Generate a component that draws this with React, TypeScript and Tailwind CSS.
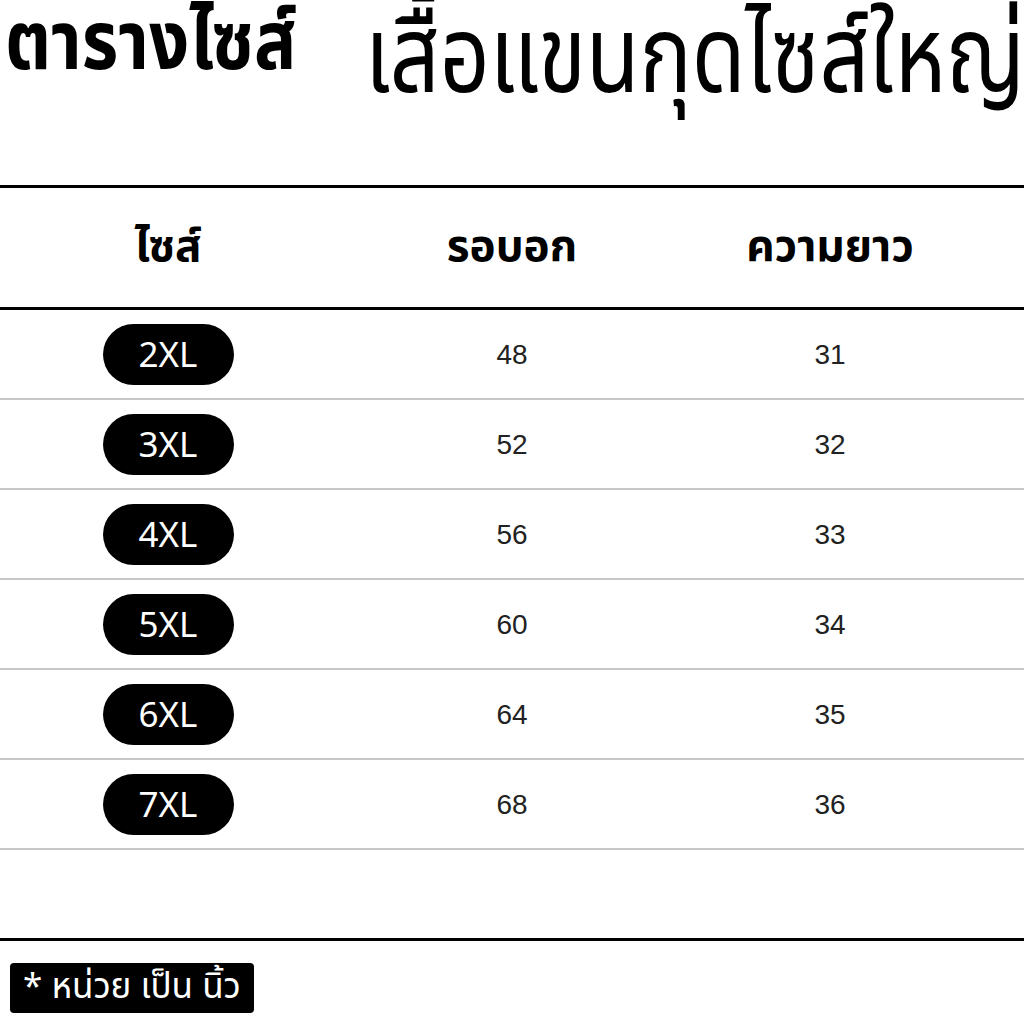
const rows = [
  { size: "2XL", chest: "48", length: "31" },
  { size: "3XL", chest: "52", length: "32" },
  { size: "4XL", chest: "56", length: "33" },
  { size: "5XL", chest: "60", length: "34" },
  { size: "6XL", chest: "64", length: "35" },
  { size: "7XL", chest: "68", length: "36" },
];

const thai = { fontFamily: '"Noto Sans Thai", "Noto Sans Thai Looped", Loma, Garuda, "Noto Sans", sans-serif' };
const arial = { fontFamily: '"Liberation Sans", Arial, sans-serif' };

export default function App() {
  return (
    <div className="w-[1024px] h-[1024px] bg-white text-black overflow-hidden flex flex-col" style={thai}>
      {/* title — the source font is condensed, so squeeze horizontally */}
      <div className="h-[185px] flex items-start">
        <div className="w-[365px] shrink-0 pl-[5px] pt-[3px]">
          <h1 className="inline-block whitespace-nowrap text-[82px] font-bold leading-none origin-left scale-x-[0.86]">
            ตารางไซส์
          </h1>
        </div>
        <div className="pt-[6px]">
          <h2 className="inline-block whitespace-nowrap text-[107px] font-normal leading-none origin-left scale-x-[0.815]">
            เสื้อแขนกุดไซส์ใหญ่
          </h2>
        </div>
      </div>

      {/* table */}
      <div className="border-t-[3px] border-black">
        <div className="grid grid-cols-[336px_352px_284px] h-[122px] items-center border-b-[3px] border-black text-[44px] font-bold">
          <div className="text-center">ไซส์</div>
          <div className="text-center">รอบอก</div>
          <div className="text-center">ความยาว</div>
        </div>
        {rows.map((r) => (
          <div
            key={r.size}
            className="grid grid-cols-[336px_352px_284px] h-[90px] items-center border-b-2 border-[#c8c8c8]"
          >
            <div className="flex justify-center">
              <span
                className="w-[131px] h-[61px] rounded-full bg-black text-white text-[35px] flex items-center justify-center"
                style={{ fontFamily: '"Noto Sans", sans-serif' }}
              >
                {r.size}
              </span>
            </div>
            <div className="text-center text-[28px] text-[#222] pt-[2px]" style={arial}>
              {r.chest}
            </div>
            <div className="text-center text-[28px] text-[#222] pt-[2px]" style={arial}>
              {r.length}
            </div>
          </div>
        ))}
      </div>

      <div className="h-[88px]" />
      <div className="border-t-[3px] border-black" />

      <div className="pt-[22px] pl-[10px]">
        <span className="inline-flex items-center h-[50px] px-[13px] rounded-[4px] bg-black text-white text-[35px]">
          * หน่วย เป็น นิ้ว
        </span>
      </div>
    </div>
  );
}
